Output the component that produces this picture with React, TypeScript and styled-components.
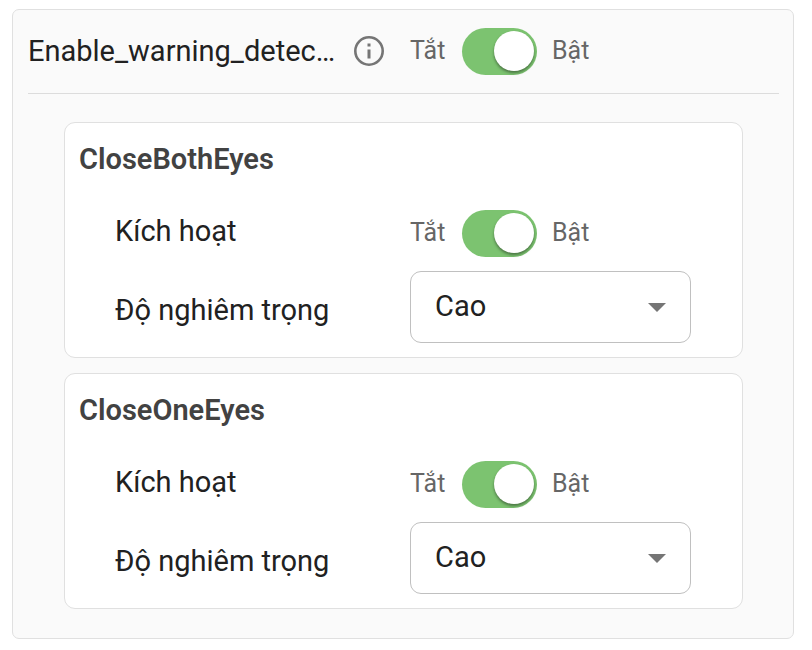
import { useId, useState } from "react";
import styled, { createGlobalStyle } from "styled-components";

const GlobalStyle = createGlobalStyle`
  *, *::before, *::after { box-sizing: border-box; }
  body {
    margin: 0;
    background: #ffffff;
    color: #212121;
    font-family: Roboto, "Noto Sans", sans-serif;
    font-size: 29px;
    line-height: 40px;
  }
`;

const Panel = styled.main`
  margin: 9px 18px 11px 12px;
  padding: 0 14px 29px 15px;
  background: #fafafa;
  border: 1px solid #e0e0e0;
  border-radius: 7px;
`;

const Header = styled.header`
  display: grid;
  grid-template-columns: 382px 1fr;
  align-items: center;
  padding: 18px 0;
  border-bottom: 1px solid #dcdcdc;
`;

const HeaderLabel = styled.div`
  display: flex;
  align-items: center;
  gap: 18px;
  padding-bottom: 2px;
`;

const HeaderTitle = styled.h1`
  margin: 0;
  font-size: 29px;
  font-weight: 400;
  line-height: 40px;
  white-space: nowrap;
`;

const InfoButton = styled.button`
  display: flex;
  padding: 0;
  border: 0;
  background: none;
  color: #757575;
  cursor: pointer;
`;

const CardList = styled.div`
  display: grid;
  gap: 15px;
  padding: 28px 36px 0 36px;
`;

const Card = styled.section`
  padding: 14px;
  background: #ffffff;
  border: 1px solid #e0e0e0;
  border-radius: 11px;
`;

const CardTitle = styled.h2`
  margin: 0 0 29px;
  color: #424242;
  font-size: 29px;
  font-weight: 600;
  line-height: 44px;
`;

const Rows = styled.div`
  display: grid;
  gap: 14px;
  padding: 0 37px 0 36px;
`;

const Row = styled.div`
  display: grid;
  grid-template-columns: 295px 1fr;
  align-items: center;
`;

const RowLabel = styled.label<{ $low?: boolean }>`
  padding-top: ${(p) => (p.$low ? "6px" : "0")};
  padding-bottom: ${(p) => (p.$low ? "0" : "6px")};
`;

const SwitchGroup = styled.div`
  display: flex;
  align-items: center;
  gap: 15px;
`;

const SwitchText = styled.span`
  min-width: 37px;
  padding-bottom: 2px;
  color: #666666;
  font-size: 25px;
  line-height: 32px;
`;

const SwitchInput = styled.input`
  appearance: none;
  display: flex;
  align-items: center;
  width: 75px;
  height: 47px;
  margin: 0;
  padding: 3px 3px 4px;
  border-radius: 24px;
  background: #bdbdbd;
  cursor: pointer;

  &::before {
    content: "";
    width: 40px;
    height: 40px;
    border-radius: 50%;
    background: #ffffff;
    box-shadow: 0 2px 3px rgba(0, 0, 0, 0.4);
  }

  &:checked {
    justify-content: flex-end;
    background: #7cc370;
  }
`;

const SelectBox = styled.div`
  display: grid;
  align-items: center;
  border: 1px solid #c0c0c0;
  border-radius: 11px;
  background: #ffffff;

  & > * {
    grid-area: 1 / 1;
  }
`;

const SelectInput = styled.select`
  appearance: none;
  width: 100%;
  height: 70px;
  padding: 0 56px 2px 24px;
  border: 0;
  border-radius: 10px;
  background: transparent;
  color: #212121;
  font: inherit;
  cursor: pointer;
`;

const Arrow = styled.svg`
  justify-self: end;
  margin-right: 24px;
  fill: #757575;
  pointer-events: none;
`;

function Toggle({ id, label }: { id: string; label: string }) {
  const [on, setOn] = useState(true);
  return (
    <SwitchGroup>
      <SwitchText>Tắt</SwitchText>
      <SwitchInput
        id={id}
        type="checkbox"
        role="switch"
        aria-label={label}
        checked={on}
        onChange={(e) => setOn(e.target.checked)}
      />
      <SwitchText>Bật</SwitchText>
    </SwitchGroup>
  );
}

function WarningCard({ name }: { name: string }) {
  const id = useId();
  return (
    <Card>
      <CardTitle>{name}</CardTitle>
      <Rows>
        <Row>
          <RowLabel htmlFor={`${id}-on`}>Kích hoạt</RowLabel>
          <Toggle id={`${id}-on`} label="Kích hoạt" />
        </Row>
        <Row>
          <RowLabel $low htmlFor={`${id}-level`}>Độ nghiêm trọng</RowLabel>
          <SelectBox>
            <SelectInput id={`${id}-level`} defaultValue="Cao">
              <option>Cao</option>
            </SelectInput>
            <Arrow width="18" height="9" viewBox="0 0 18 9" aria-hidden="true">
              <path d="M0 0h18L9 9z" />
            </Arrow>
          </SelectBox>
        </Row>
      </Rows>
    </Card>
  );
}

export default function App() {
  return (
    <>
      <GlobalStyle />
      <Panel>
        <Header>
          <HeaderLabel>
            <HeaderTitle>Enable_warning_detec…</HeaderTitle>
            <InfoButton type="button" aria-label="Info">
              <svg width="32" height="32" viewBox="0 0 32 32" fill="none" aria-hidden="true">
                <circle cx="16" cy="16" r="13.7" stroke="currentColor" strokeWidth="2.6" />
                <path d="M16 14.5v9M16 8.5v3" stroke="currentColor" strokeWidth="3" />
              </svg>
            </InfoButton>
          </HeaderLabel>
          <Toggle id="warning-detection" label="Enable_warning_detec…" />
        </Header>
        <CardList>
          <WarningCard name="CloseBothEyes" />
          <WarningCard name="CloseOneEyes" />
        </CardList>
      </Panel>
    </>
  );
}
